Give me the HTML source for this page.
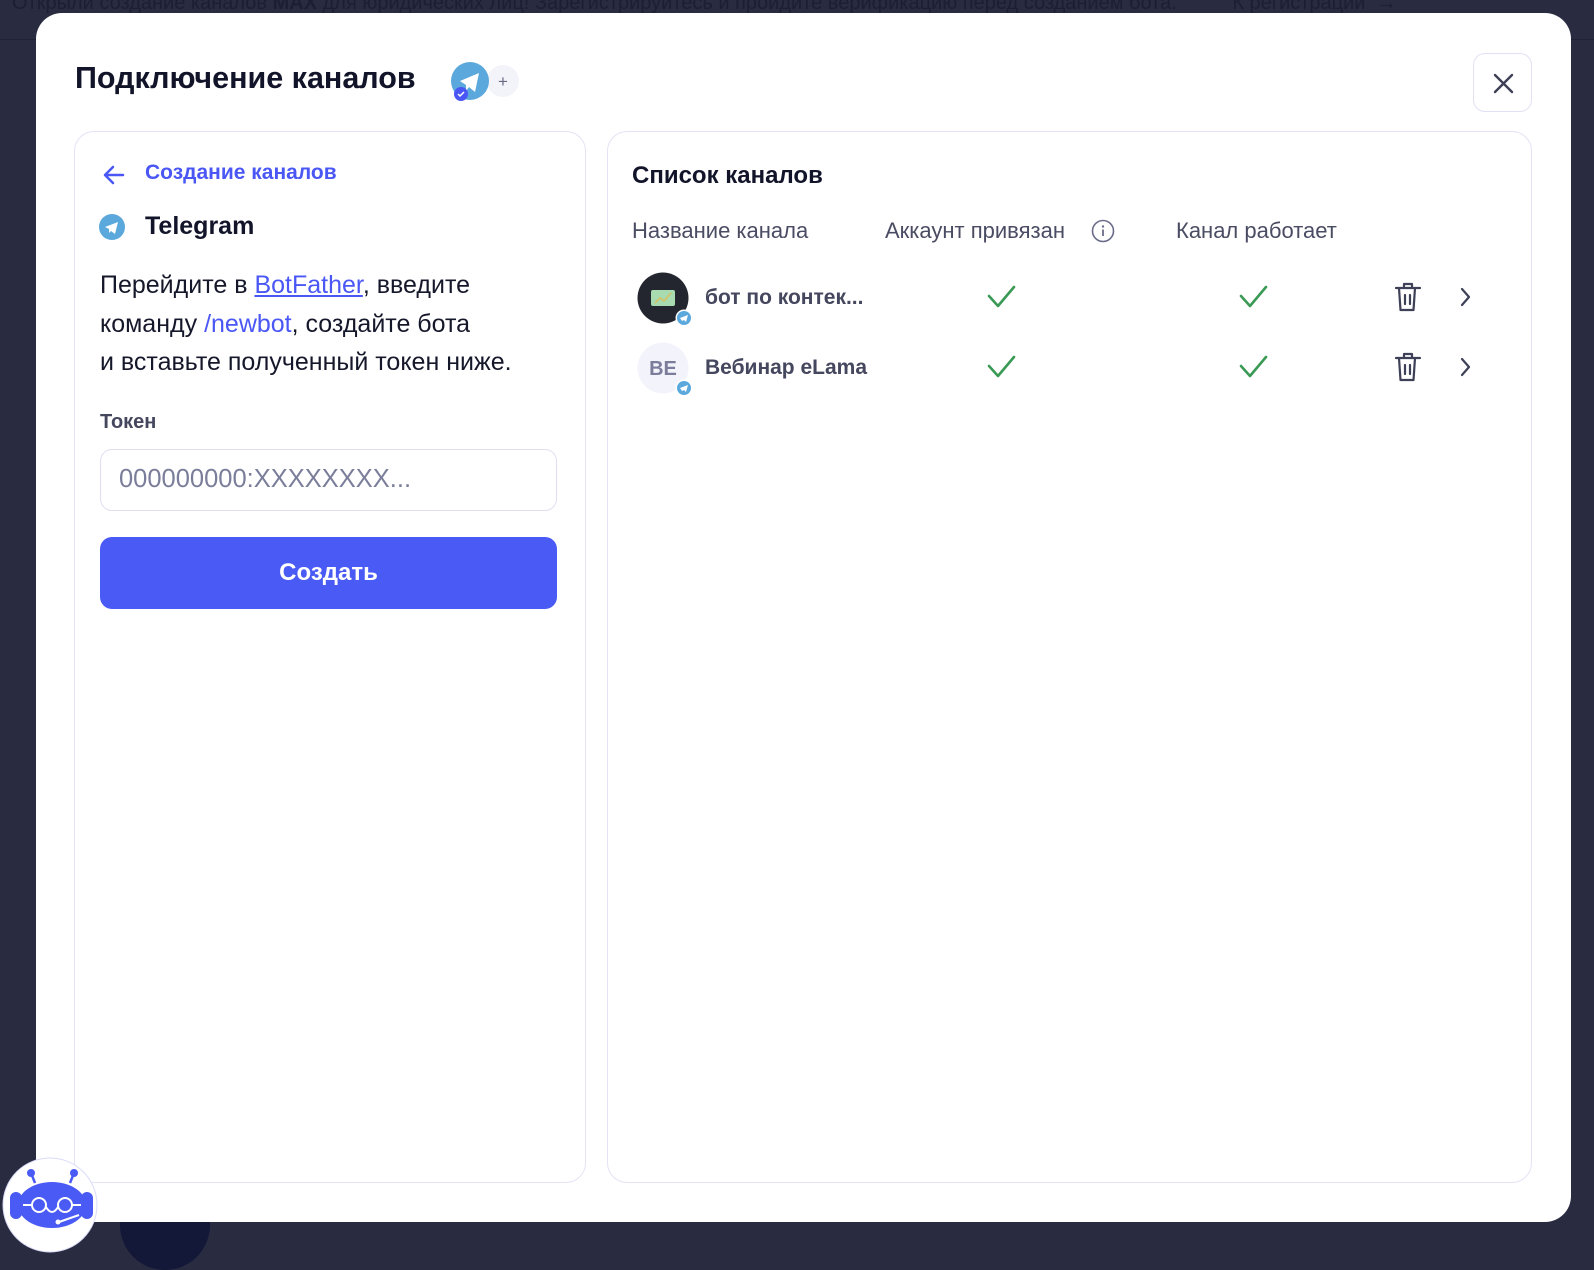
<!DOCTYPE html>
<html><head><meta charset="utf-8"><style>
*{box-sizing:border-box;margin:0;padding:0}
body{width:1594px;height:1262px;background:#292b40;font-family:"Liberation Sans","DejaVu Sans",sans-serif;position:relative;overflow:hidden}
.banner{position:absolute;top:-8px;left:12px;color:#1c1f33;font-size:20px;white-space:nowrap}
.hline{position:absolute;left:0;right:0;top:39px;height:1px;background:#1f2134}
.modal{position:absolute;left:36px;top:13px;width:1535px;height:1209px;background:#fff;border-radius:26px}
.abs{position:absolute}
.title{left:39px;top:48px;font-size:30.5px;font-weight:bold;color:#12142a}
.close{left:1437px;top:40px;width:59px;height:59px;border:1px solid #e1e1f5;border-radius:12px}
.panel{border:1px solid #e3e3f5;border-radius:20px;background:#fff}
.back{left:70px;top:29px;font-size:21px;font-weight:bold;color:#4a57f5}
.tg{left:70px;top:80px;font-size:25px;font-weight:bold;color:#12142a}
.para{left:25px;top:134px;font-size:25px;line-height:38.5px;color:#15172a;white-space:nowrap}
.para a{color:#4a57f5}
.lab{left:25px;top:279px;font-size:20px;font-weight:bold;color:#45475e}
.inp{left:25px;top:317px;width:457px;height:62px;border:1px solid #dddff0;border-radius:12px;font-size:25.5px;color:#7b7e9a;padding:15px 18px}
.btn{left:25px;top:405px;width:457px;height:72px;background:#4a5af5;border-radius:12px;color:#fff;font-size:24px;font-weight:bold;text-align:center;line-height:72px}
.rt{left:24px;top:30px;font-size:24px;font-weight:bold;color:#12142a}
.hd{top:86px;font-size:22px;color:#4a4c63}
.nm{font-size:21px;font-weight:bold;color:#45475e}
</style></head><body>
<div class="banner">Открыли создание каналов <b>MAX</b> для юридических лиц! Зарегистрируйтесь и пройдите верификацию перед созданием бота. <span style="margin-left:50px">К регистрации &nbsp;→</span></div>
<div class="hline"></div>
<div class="abs" style="left:120px;top:1180px;width:90px;height:90px;border-radius:50%;background:#131838"></div>
<div class="modal">
 <div class="abs title">Подключение каналов</div>
 <svg class="abs" style="left:412px;top:48px" width="80" height="44">
  <circle cx="55" cy="20" r="16" fill="#f3f3fa"/><text x="55" y="26" font-size="17" text-anchor="middle" fill="#6a6c86" font-family="Liberation Sans">+</text>
  <circle cx="22" cy="20" r="19" fill="#5aa8dc"/>
  <path d="M12 20 L31 12 L27 31 L21 26 L18 30 L18 24 Z" fill="#fff"/>
  <circle cx="13" cy="33" r="7" fill="#4a57f5"/><path d="M10 33 l2 2 l4 -4" stroke="#fff" stroke-width="1.5" fill="none"/>
 </svg>
 <div class="abs close"><svg width="59" height="59"><path d="M21 21 L38 38 M38 21 L21 38" stroke="#3e4057" stroke-width="2.4" stroke-linecap="round"/></svg></div>
 <div class="abs panel" style="left:38px;top:118px;width:512px;height:1052px">
  <svg class="abs" style="left:26px;top:30px" width="26" height="26"><path d="M22 13 H4 M12 5 L4 13 L12 21" stroke="#4a57f5" stroke-width="2.5" fill="none" stroke-linecap="round" stroke-linejoin="round"/></svg>
  <div class="abs back">Создание каналов</div>
  <svg class="abs" style="left:24px;top:82px" width="26" height="26"><circle cx="13" cy="13" r="13" fill="#5aa8dc"/><path d="M6 13 L19 8 L16 20 L12 17 L10 19 L10 15 Z" fill="#fff"/></svg>
  <div class="abs tg">Telegram</div>
  <div class="abs para">Перейдите в <a style="text-decoration:underline">BotFather</a>, введите<br>команду <a>/newbot</a>, создайте бота<br>и вставьте полученный токен ниже.</div>
  <div class="abs lab">Токен</div>
  <div class="abs inp">000000000:XXXXXXXX...</div>
  <div class="abs btn">Создать</div>
 </div>
 <div class="abs panel" style="left:571px;top:118px;width:925px;height:1052px">
  <div class="abs rt">Список каналов</div>
  <div class="abs hd" style="left:24px">Название канала</div>
  <div class="abs hd" style="left:277px">Аккаунт привязан</div>
  <svg class="abs" style="left:483px;top:87px" width="24" height="24"><circle cx="12" cy="12" r="10.5" stroke="#6a6c8a" stroke-width="1.6" fill="none"/><path d="M12 10.5 V17" stroke="#6a6c8a" stroke-width="1.8"/><circle cx="12" cy="7.5" r="1.2" fill="#6a6c8a"/></svg>
  <div class="abs hd" style="left:568px">Канал работает</div>
  <svg class="abs" style="left:29px;top:140px" width="62" height="60"><circle cx="26" cy="26" r="25.5" fill="#23262f"/><rect x="14" y="18" width="24" height="16" rx="2" fill="#a8dbb0"/><path d="M18 31 l5 -5 l4 3 l7 -8" stroke="#d8c060" stroke-width="1.5" fill="none"/><circle cx="47" cy="46" r="8.5" fill="#fff"/><circle cx="47" cy="46" r="7" fill="#5aa8dc"/><path d="M43 46 L51 43 L49 50 L47 48 L45 49 Z" fill="#fff"/></svg>
  <div class="abs nm" style="left:97px;top:154px">бот по контек...</div>
  <svg class="abs" style="left:29px;top:210px" width="62" height="60"><circle cx="26" cy="26" r="25.5" fill="#f3f3fb"/><text x="26" y="33" font-size="20" font-weight="bold" text-anchor="middle" fill="#7b7d9a" font-family="Liberation Sans">BE</text><circle cx="47" cy="46" r="8.5" fill="#fff"/><circle cx="47" cy="46" r="7" fill="#5aa8dc"/><path d="M43 46 L51 43 L49 50 L47 48 L45 49 Z" fill="#fff"/></svg>
  <div class="abs nm" style="left:97px;top:224px">Вебинар eLama</div>
  <svg class="abs" style="left:0;top:0" width="925" height="300">
   <g stroke="#3a9a55" stroke-width="2.6" fill="none" stroke-linecap="round" stroke-linejoin="round">
    <path d="M381 164 l9 10 l16 -19"/><path d="M633 164 l9 10 l16 -19"/>
    <path d="M381 234 l9 10 l16 -19"/><path d="M633 234 l9 10 l16 -19"/>
   </g>
   <g stroke="#3e4057" stroke-width="2.2" fill="none" stroke-linecap="round" stroke-linejoin="round">
    <path d="M788 156 h24 M796 156 v-4 h8 v4 M791 156 l1.5 22 h13 l1.5 -22 M797 163 v9 M802 163 v9"/>
    <path d="M788 226 h24 M796 226 v-4 h8 v4 M791 226 l1.5 22 h13 l1.5 -22 M797 233 v9 M802 233 v9"/>
    <path d="M854 157 l7 8 l-7 8"/><path d="M854 227 l7 8 l-7 8"/>
   </g>
  </svg>
 </div>
</div>
<svg class="abs" style="left:1px;top:1155px" width="100" height="100">
 <circle cx="49" cy="50" r="47" fill="#fff" stroke="#dadcf8" stroke-width="1"/>
 <g fill="#4a5af5"><circle cx="30" cy="18" r="4"/><circle cx="73" cy="18" r="4"/>
 <path d="M30 18 L34 28 M73 18 L69 28" stroke="#4a5af5" stroke-width="2.5"/>
 <ellipse cx="51" cy="50" rx="34" ry="23"/>
 <rect x="9" y="37" width="12" height="27" rx="6"/><rect x="80" y="37" width="12" height="27" rx="6"/></g>
 <g stroke="#fff" stroke-width="2" fill="none"><circle cx="38" cy="50" r="7"/><circle cx="64" cy="50" r="7"/><path d="M45 52 q6 10 12 0 M22 50 h9 M71 50 h9 M58 67 l20 -7"/></g>
 <circle cx="57" cy="67" r="2.5" fill="#fff"/>
</svg>
</body></html>
